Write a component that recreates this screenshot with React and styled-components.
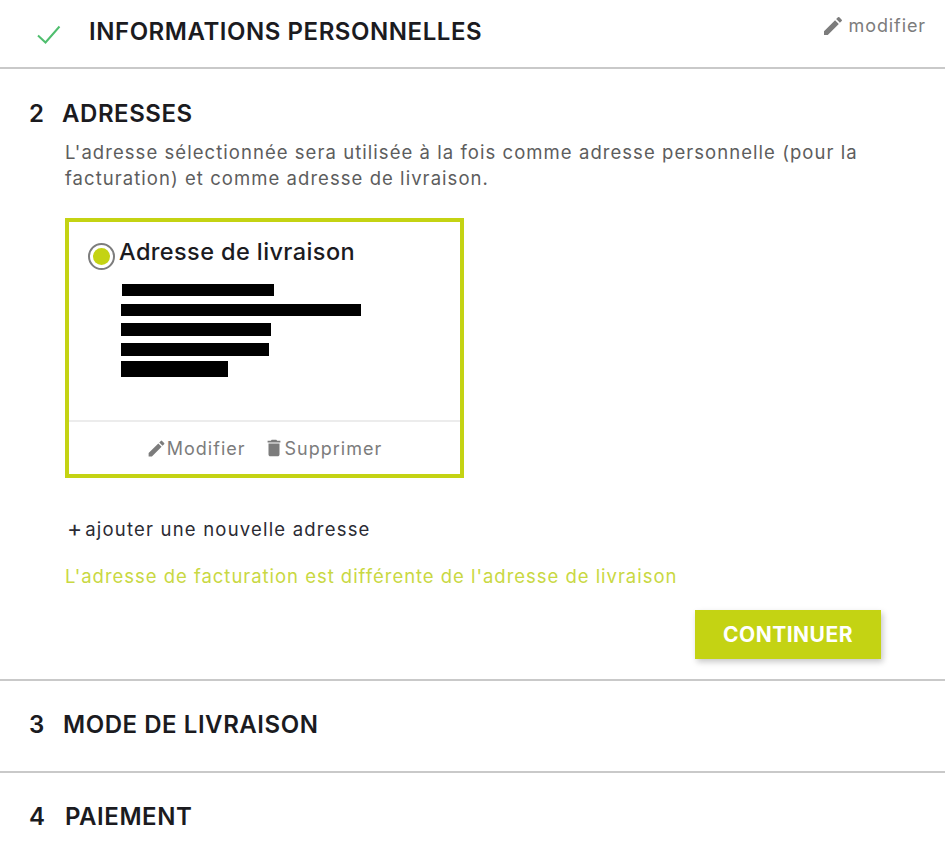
import React from "react"
import styled, { createGlobalStyle } from "styled-components"

const lime = "#c4d313"

const GlobalStyle = createGlobalStyle`
  html, body {
    margin: 0;
    padding: 0;
    background: #ffffff;
  }
  body {
    font-family: Inter, "Open Sans", sans-serif;
  }
`

const Page = styled.div`
  width: 945px;
  height: 864px;
  overflow: hidden;
  background: #fff;
`

// Checkout steps
const Step = styled.section`
  height: ${(p) => p.$height}px;
  box-sizing: border-box;
  padding: ${(p) => p.$top}px 0 0 ${(p) => p.$left}px;
  border-bottom: ${(p) => (p.$last ? "none" : "2px solid #c9c9c9")};
`

const DoneHeader = styled.div`
  display: flex;
  align-items: flex-start;
  justify-content: space-between;
  padding-right: 19px;
`

const TitleRow = styled.div`
  display: flex;
  align-items: center;
`

const StepTitle = styled.h2`
  margin: 0;
  font-size: 24px;
  line-height: 28px;
  font-weight: 600;
  letter-spacing: 0.55px;
  color: #1b1b1f;
`

const StepNumber = styled.span`
  width: ${(p) => p.$width}px;
  font-size: 24px;
  line-height: 28px;
  font-weight: 600;
  color: #1b1b1f;
`

const CheckIcon = styled.svg`
  width: 26px;
  height: 20px;
  margin: 4px 27px 0 0;
`

const EditLink = styled.a`
  display: flex;
  align-items: center;
  gap: 4px;
  margin-top: -4px;
  font-size: 18px;
  line-height: 24px;
  letter-spacing: 0.9px;
  color: #7c7c7c;
`

const Intro = styled.p`
  width: 810px;
  margin: 11px 0 0 36px;
  font-size: 18.5px;
  line-height: 26px;
  letter-spacing: 1.05px;
  color: #5d5d5d;
`

const AddressCard = styled.div`
  width: 399px;
  height: 260px;
  box-sizing: border-box;
  margin: 27px 0 0 36px;
  border: 4px solid ${lime};
  display: flex;
  flex-direction: column;
`

const CardBody = styled.div`
  flex: 1;
  padding: 16px 0 0 19px;
  border-bottom: 2px solid #ececec;
`

const CardTitleRow = styled.div`
  display: flex;
  align-items: flex-start;
  gap: 4px;
`

const Radio = styled.span`
  width: 27px;
  height: 27px;
  box-sizing: border-box;
  margin-top: 5px;
  border: 2px solid #7d7d7d;
  border-radius: 50%;
  padding: 3px;
  background: #fff;
  flex-shrink: 0;

  &::after {
    content: "";
    display: block;
    width: 100%;
    height: 100%;
    border-radius: 50%;
    background: ${lime};
  }
`

const CardTitle = styled.h3`
  margin: 0;
  font-size: 23.5px;
  line-height: 28px;
  font-weight: 500;
  letter-spacing: 0.4px;
  color: #1b1b1f;
`

const RedactedLines = styled.div`
  display: flex;
  flex-direction: column;
  margin: 14px 0 0 33px;
`

const Redacted = styled.div`
  width: ${(p) => p.$width}px;
  height: ${(p) => p.$height}px;
  margin: ${(p) => p.$gap || 0}px 0 0 ${(p) => p.$offset || 0}px;
  background: #000;
`

const CardActions = styled.div`
  height: 52px;
  display: flex;
  align-items: center;
  justify-content: center;
  gap: 17px;
  padding-right: 1px;
`

const CardAction = styled.a`
  display: flex;
  align-items: center;
  font-size: 18px;
  letter-spacing: 1px;
  color: #7c7c7c;
`

const AddAddress = styled.a`
  display: flex;
  align-items: center;
  gap: 3px;
  margin: 39px 0 0 38px;
  font-size: 18.5px;
  line-height: 24px;
  letter-spacing: 1.2px;
  color: #2b2b33;
`

const PlusSign = styled.span`
  font-size: 23px;
  letter-spacing: 0;
`

const BillingLink = styled.a`
  display: block;
  margin: 23px 0 0 36px;
  font-size: 18.5px;
  line-height: 24px;
  letter-spacing: 0.97px;
  color: #c9d842;
`

const ButtonRow = styled.div`
  display: flex;
  justify-content: flex-end;
  padding-right: 64px;
  margin-top: 22px;
`

const ContinueButton = styled.button`
  width: 186px;
  height: 49px;
  border: none;
  background: ${lime};
  box-shadow: 2px 3px 6px rgba(0, 0, 0, 0.22);
  color: #fff;
  font-family: inherit;
  font-size: 21px;
  font-weight: 700;
  letter-spacing: 0.5px;
`

const Pencil = ({ size }) => (
  <svg width={size} height={size} viewBox="0 0 24 24" fill="#7c7c7c">
    <path d="M3 17.25V21h3.75L17.81 9.94l-3.75-3.75L3 17.25zM20.71 7.04a1 1 0 0 0 0-1.41l-2.34-2.34a1 1 0 0 0-1.41 0l-1.83 1.83 3.75 3.75 1.83-1.83z" />
  </svg>
)

const Trash = () => (
  <svg width="22" height="22" viewBox="0 0 24 24" fill="#7c7c7c">
    <path d="M6 19c0 1.1.9 2 2 2h8c1.1 0 2-.9 2-2V7H6v12zM19 4h-3.5l-1-1h-5l-1 1H5v2h14V4z" />
  </svg>
)

const App = () => {
  return (
    <Page>
      <GlobalStyle />

      <Step $height={69} $top={18} $left={36}>
        <DoneHeader>
          <TitleRow>
            <CheckIcon viewBox="0 0 26 20" fill="none">
              <path d="M2 11.5l7.5 7L23.5 2.5" stroke="#4fbe6e" strokeWidth="2" />
            </CheckIcon>
            <StepTitle>INFORMATIONS PERSONNELLES</StepTitle>
          </TitleRow>
          <EditLink>
            <Pencil size={24} />
            modifier
          </EditLink>
        </DoneHeader>
      </Step>

      <Step $height={612} $top={31} $left={29}>
        <TitleRow>
          <StepNumber $width={33}>2</StepNumber>
          <StepTitle>ADRESSES</StepTitle>
        </TitleRow>
        <Intro>
          L'adresse sélectionnée sera utilisée à la fois comme adresse
          personnelle (pour la facturation) et comme adresse de livraison.
        </Intro>
        <AddressCard>
          <CardBody>
            <CardTitleRow>
              <Radio />
              <CardTitle>Adresse de livraison</CardTitle>
            </CardTitleRow>
            <RedactedLines>
              <Redacted $width={152} $height={12} $offset={1} />
              <Redacted $width={240} $height={12} $gap={8} />
              <Redacted $width={150} $height={13} $gap={7} />
              <Redacted $width={148} $height={13} $gap={7} />
              <Redacted $width={107} $height={16} $gap={5} />
            </RedactedLines>
          </CardBody>
          <CardActions>
            <CardAction>
              <Pencil size={21} />
              Modifier
            </CardAction>
            <CardAction>
              <Trash />
              Supprimer
            </CardAction>
          </CardActions>
        </AddressCard>
        <AddAddress>
          <PlusSign>+</PlusSign>
          ajouter une nouvelle adresse
        </AddAddress>
        <BillingLink>
          L'adresse de facturation est différente de l'adresse de livraison
        </BillingLink>
        <ButtonRow>
          <ContinueButton>CONTINUER</ContinueButton>
        </ButtonRow>
      </Step>

      <Step $height={92} $top={30} $left={29}>
        <TitleRow>
          <StepNumber $width={34}>3</StepNumber>
          <StepTitle>MODE DE LIVRAISON</StepTitle>
        </TitleRow>
      </Step>

      <Step $height={91} $top={30} $left={29} $last>
        <TitleRow>
          <StepNumber $width={36}>4</StepNumber>
          <StepTitle>PAIEMENT</StepTitle>
        </TitleRow>
      </Step>
    </Page>
  )
}

export default App
